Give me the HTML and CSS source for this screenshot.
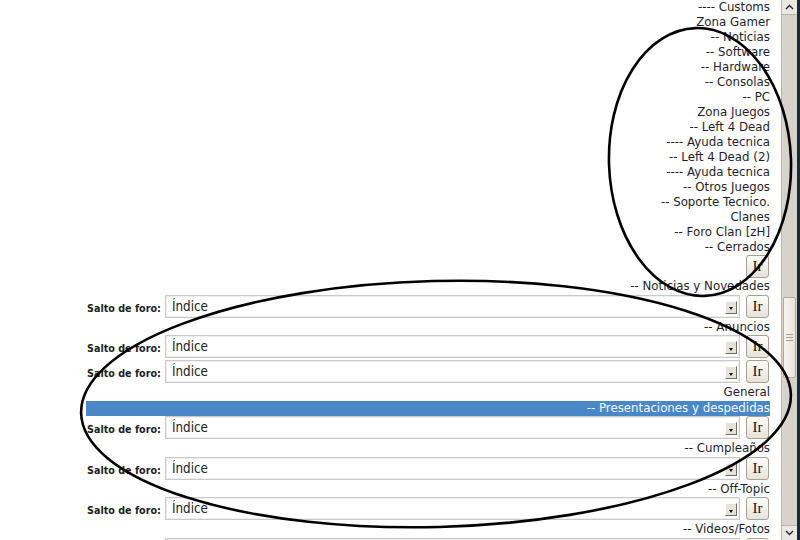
FILE: index.html
```html
<!DOCTYPE html>
<html lang="es">
<head>
<meta charset="utf-8">
<title>Salto de foro</title>
<link rel="stylesheet" href="styles.css">
</head>
<body>
<div class="screen">
  <main class="page">
    <ul class="forums">
      <li>---- Customs</li>
      <li>Zona Gamer</li>
      <li>-- Noticias</li>
      <li>-- Software</li>
      <li>-- Hardware</li>
      <li>-- Consolas</li>
      <li>-- PC</li>
      <li>Zona Juegos</li>
      <li>-- Left 4 Dead</li>
      <li>---- Ayuda tecnica</li>
      <li>-- Left 4 Dead (2)</li>
      <li>---- Ayuda tecnica</li>
      <li>-- Otros Juegos</li>
      <li>-- Soporte Tecnico.</li>
      <li>Clanes</li>
      <li>-- Foro Clan [zH]</li>
      <li>-- Cerrados</li>
    </ul>
    <div class="go-row"><button class="btn">Ir</button></div>
    <p class="opt">-- Noticias y Novedades</p>
    <div class="jump"><label>Salto de foro:</label><div class="field"><span class="value">Índice</span><span class="arrow"></span></div><button class="btn">Ir</button></div>
    <p class="opt">-- Anuncios</p>
    <div class="jump"><label>Salto de foro:</label><div class="field"><span class="value">Índice</span><span class="arrow"></span></div><button class="btn">Ir</button></div>
    <div class="jump"><label>Salto de foro:</label><div class="field"><span class="value">Índice</span><span class="arrow"></span></div><button class="btn">Ir</button></div>
    <p class="opt">General</p>
    <p class="opt sel">-- Presentaciones y despedidas</p>
    <div class="jump"><label>Salto de foro:</label><div class="field"><span class="value">Índice</span><span class="arrow"></span></div><button class="btn">Ir</button></div>
    <p class="opt">-- Cumpleaños</p>
    <div class="jump"><label>Salto de foro:</label><div class="field"><span class="value">Índice</span><span class="arrow"></span></div><button class="btn">Ir</button></div>
    <p class="opt">-- Off-Topic</p>
    <div class="jump"><label>Salto de foro:</label><div class="field"><span class="value">Índice</span><span class="arrow"></span></div><button class="btn">Ir</button></div>
    <p class="opt">-- Videos/Fotos</p>
    <div class="jump"><label>Salto de foro:</label><div class="field"><span class="value">Índice</span><span class="arrow"></span></div><button class="btn">Ir</button></div>
  </main>
  <div class="scrollbar">
    <div class="sb-btn sb-up"><svg width="9" height="6" viewBox="0 0 9 6"><path d="M1 5 L4.5 1.5 L8 5" fill="none" stroke="#222" stroke-width="1.4"/></svg></div>
    <div class="sb-track">
      <div class="sb-thumb"><span></span><span></span><span></span></div>
    </div>
    <div class="sb-btn sb-down"><svg width="9" height="6" viewBox="0 0 9 6"><path d="M1 1 L4.5 4.5 L8 1" fill="none" stroke="#222" stroke-width="1.4"/></svg></div>
  </div>
  <div class="edge"></div>
  <svg class="marks" width="800" height="540" viewBox="0 0 800 540">
    <ellipse cx="700" cy="162" rx="91" ry="134" transform="rotate(-2 700 162)" fill="none" stroke="#000" stroke-width="2.6"/>
    <ellipse cx="436" cy="404" rx="355" ry="123" transform="rotate(-1.5 436 404)" fill="none" stroke="#000" stroke-width="2.6"/>
  </svg>
</div>
</body>
</html>
```
FILE: styles.css
```css
html, body {
  margin: 0;
  padding: 0;
  height: 540px;
  overflow: hidden;
  background: #fff;
}

.screen {
  position: relative;
  display: flex;
  height: 540px;
}

.page {
  flex: 1;
  min-width: 0;
  padding: 0 11px 0 86px;
  font-family: "DejaVu Sans", "Liberation Sans", sans-serif;
  font-size: 11.8px;
  color: #1e1e2a;
}

.forums {
  list-style: none;
  margin: 0;
  padding: 0;
  text-align: right;
}

.forums li {
  line-height: 15px;
  height: 15px;
  white-space: nowrap;
}

.go-row {
  display: flex;
  justify-content: flex-end;
  height: 24px;
}

.go-row .btn {
  margin-right: 1px;
}

.btn {
  width: 23px;
  height: 23px;
  box-sizing: border-box;
  padding: 0;
  border: 1px solid #a79f90;
  border-radius: 3px;
  background: linear-gradient(#fdfcfa, #e7e3da);
  font-family: "Liberation Serif", "DejaVu Serif", serif;
  font-size: 15px;
  color: #151515;
  display: flex;
  align-items: center;
  justify-content: center;
}

.opt {
  margin: 0;
  height: 15.5px;
  line-height: 15.5px;
  text-align: right;
  white-space: nowrap;
}

.opt.sel {
  background: #4a87c7;
  color: #f3f7fc;
}

.jump {
  display: flex;
  align-items: flex-start;
  height: 25px;
}

.jump label {
  flex: 0 0 79px;
  box-sizing: border-box;
  padding: 8px 0 0 1px;
  font-family: "DejaVu Sans", "Liberation Sans", sans-serif;
  font-weight: bold;
  font-size: 9.6px;
  line-height: 12px;
  color: #1d1d1d;
  white-space: nowrap;
}

.field {
  flex: 1;
  height: 23px;
  box-sizing: border-box;
  border: 1px solid #c9c9c9;
  box-shadow: inset 0 0 0 1px #efefef;
  background: #fff;
  display: flex;
  align-items: center;
  padding: 0 2px 0 6px;
}

.value {
  flex: 1;
  font-family: "DejaVu Sans Condensed", "DejaVu Sans", sans-serif;
  font-size: 13.3px;
  color: #222;
}

.arrow {
  width: 12px;
  height: 13px;
  box-sizing: border-box;
  margin-top: 2px;
  border: 1px solid;
  border-color: #fbfaf8 #6f6b63 #6f6b63 #fbfaf8;
  background: #e6e2da;
  display: flex;
  align-items: center;
  justify-content: center;
}

.arrow::after {
  content: "";
  width: 0;
  height: 0;
  margin-top: 3px;
  border-left: 2.5px solid transparent;
  border-right: 2.5px solid transparent;
  border-top: 3px solid #111;
}

.jump .btn {
  margin-left: 6px;
  margin-right: 1px;
}

.scrollbar {
  width: 16px;
  box-sizing: border-box;
  display: flex;
  flex-direction: column;
  background: #d7d3cb;
  border-left: 1px solid #bab4a8;
}

.sb-btn {
  height: 14px;
  flex: 0 0 14px;
  background: #ebe8e2;
  display: flex;
  align-items: center;
  justify-content: center;
}

.sb-up {
  border-bottom: 1px solid #bcb6aa;
}

.sb-down {
  border-top: 1px solid #bcb6aa;
}

.sb-track {
  flex: 1;
  display: flex;
  flex-direction: column;
}

.sb-thumb {
  margin: 282px 1px 0 1px;
  height: 81px;
  box-sizing: border-box;
  border: 1px solid #b2ab9e;
  border-radius: 2px;
  background: linear-gradient(to right, #f6f4f0, #e8e4dc);
  display: flex;
  flex-direction: column;
  align-items: center;
  justify-content: center;
  gap: 2px;
}

.sb-thumb span {
  width: 7px;
  height: 1px;
  background: #a9a295;
}

.edge {
  width: 3px;
  background: #1a2a32;
}

.marks {
  position: absolute;
  left: 0;
  top: 0;
  pointer-events: none;
}
```
